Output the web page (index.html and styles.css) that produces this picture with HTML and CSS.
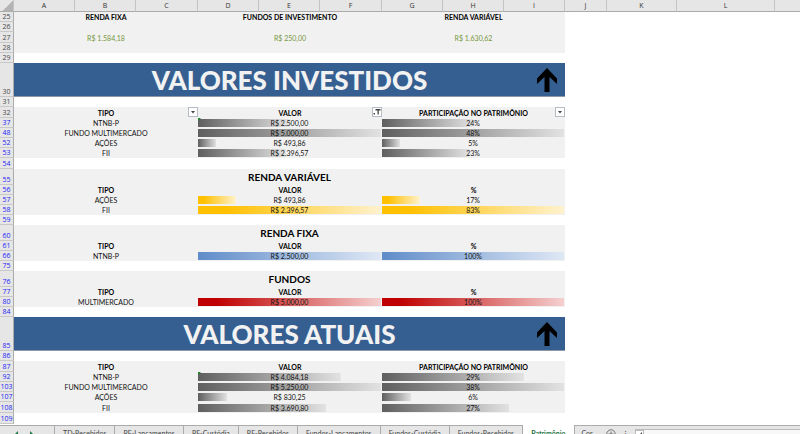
FILE: index.html
```
<!DOCTYPE html>
<html lang="pt-BR">
<head>
<meta charset="utf-8">
<title>Patrimônio</title>
<link rel="stylesheet" href="styles.css">
</head>
<body>
<main class="sheet">
<table class="grid">
<colgroup>
<col class="c-head"><col class="c-a"><col class="c-a"><col class="c-b"><col class="c-a"><col class="c-a"><col class="c-b"><col class="c-a"><col class="c-a"><col class="c-a"><col class="c-j"><col class="c-k"><col class="c-l"><col>
</colgroup>
<thead>
<tr><th class="corner"></th><th>A</th><th>B</th><th>C</th><th>D</th><th>E</th><th>F</th><th>G</th><th>H</th><th>I</th><th>J</th><th>K</th><th>L</th><th></th></tr>
</thead>
<tbody>
<tr class="fill bold"><th>25</th><td colspan="3">RENDA FIXA</td><td colspan="3">FUNDOS DE INVESTIMENTO</td><td colspan="3">RENDA VARIÁVEL</td></tr>
<tr class="fill"><th>26</th><td colspan="9"></td></tr>
<tr class="fill green tall"><th>27</th><td colspan="3">R$ 1.584,18</td><td colspan="3">R$ 250,00</td><td colspan="3">R$ 1.630,62</td></tr>
<tr class="fill"><th>28</th><td colspan="9"></td></tr>
<tr><th>29</th><td colspan="9"></td></tr>
<tr class="banner"><th>30</th><td colspan="9"><h1>VALORES INVESTIDOS</h1><a class="up" href="#" aria-label="Topo"><svg viewBox="0 0 20 24"><path d="M10 0L20 10.500V16L12.500 9V24H7.500V9L0 16V10.500Z"/></svg></a></td></tr>
<tr><th>31</th><td colspan="9"></td></tr>
<tr class="fill bold tall"><th>32</th><td colspan="3">TIPO<button class="filter" aria-label="Filtrar tipo"><svg viewBox="0 0 8 8"><path d="M2 3h4L4 5.500z"/></svg></button></td><td colspan="3">VALOR<button class="filter" aria-label="Filtrar valor"><svg viewBox="0 0 8 8"><path d="M2.500 1h5v1.500H5.800V6.500H4.500V2.500h-2zM0.500 5H2v1.500H0.500z"/></svg></button></td><td colspan="3">PARTICIPAÇÃO NO PATRIMÔNIO<button class="filter" aria-label="Filtrar participação"><svg viewBox="0 0 8 8"><path d="M2 3h4L4 5.500z"/></svg></button></td></tr>
<tr class="fill hidden-rows"><th>37</th><td colspan="3">NTNB-P</td><td colspan="3" class="flag"><div class="bar gray" style="--w:50%">R$ 2.500,00</div></td><td colspan="3"><div class="bar gray" style="--w:50%">24%</div></td></tr>
<tr class="fill hidden-rows"><th>48</th><td colspan="3">FUNDO MULTIMERCADO</td><td colspan="3"><div class="bar gray" style="--w:100%">R$ 5.000,00</div></td><td colspan="3"><div class="bar gray" style="--w:100%">48%</div></td></tr>
<tr class="fill hidden-rows"><th>52</th><td colspan="3">AÇÕES</td><td colspan="3"><div class="bar gray" style="--w:10%">R$ 493,86</div></td><td colspan="3"><div class="bar gray" style="--w:10%">5%</div></td></tr>
<tr class="fill hidden-rows"><th>53</th><td colspan="3">FII</td><td colspan="3"><div class="bar gray" style="--w:48%">R$ 2.396,57</div></td><td colspan="3"><div class="bar gray" style="--w:48%">23%</div></td></tr>
<tr class="hidden-rows tall"><th>54</th><td colspan="9"></td></tr>
<tr class="fill hidden-rows group"><th>55</th><td colspan="9"><h2>RENDA VARIÁVEL</h2></td></tr>
<tr class="fill hidden-rows bold"><th>56</th><td colspan="3">TIPO</td><td colspan="3">VALOR</td><td colspan="3">%</td></tr>
<tr class="fill hidden-rows"><th>57</th><td colspan="3">AÇÕES</td><td colspan="3"><div class="bar yellow" style="--w:21%">R$ 493,86</div></td><td colspan="3"><div class="bar yellow" style="--w:21%">17%</div></td></tr>
<tr class="fill hidden-rows"><th>58</th><td colspan="3">FII</td><td colspan="3"><div class="bar yellow" style="--w:100%">R$ 2.396,57</div></td><td colspan="3"><div class="bar yellow" style="--w:100%">83%</div></td></tr>
<tr class="hidden-rows"><th>59</th><td colspan="9"></td></tr>
<tr class="fill hidden-rows group"><th>60</th><td colspan="9"><h2>RENDA FIXA</h2></td></tr>
<tr class="fill hidden-rows bold"><th>61</th><td colspan="3">TIPO</td><td colspan="3">VALOR</td><td colspan="3">%</td></tr>
<tr class="fill hidden-rows"><th>66</th><td colspan="3">NTNB-P</td><td colspan="3"><div class="bar blue" style="--w:100%">R$ 2.500,00</div></td><td colspan="3"><div class="bar blue" style="--w:100%">100%</div></td></tr>
<tr class="hidden-rows"><th>75</th><td colspan="9"></td></tr>
<tr class="fill hidden-rows group"><th>76</th><td colspan="9"><h2>FUNDOS</h2></td></tr>
<tr class="fill hidden-rows bold"><th>77</th><td colspan="3">TIPO</td><td colspan="3">VALOR</td><td colspan="3">%</td></tr>
<tr class="fill hidden-rows"><th>80</th><td colspan="3">MULTIMERCADO</td><td colspan="3"><div class="bar red" style="--w:100%">R$ 5.000,00</div></td><td colspan="3"><div class="bar red" style="--w:100%">100%</div></td></tr>
<tr class="hidden-rows"><th>84</th><td colspan="9"></td></tr>
<tr class="banner hidden-rows"><th>85</th><td colspan="9"><h1>VALORES ATUAIS</h1><a class="up" href="#" aria-label="Topo"><svg viewBox="0 0 20 24"><path d="M10 0L20 10.500V16L12.500 9V24H7.500V9L0 16V10.500Z"/></svg></a></td></tr>
<tr class="hidden-rows"><th>86</th><td colspan="9"></td></tr>
<tr class="fill hidden-rows bold tall"><th>87</th><td colspan="3">TIPO</td><td colspan="3">VALOR</td><td colspan="3">PARTICIPAÇÃO NO PATRIMÔNIO</td></tr>
<tr class="fill hidden-rows"><th>92</th><td colspan="3">NTNB-P</td><td colspan="3" class="flag"><div class="bar gray" style="--w:78%">R$ 4.084,18</div></td><td colspan="3"><div class="bar gray" style="--w:78%">29%</div></td></tr>
<tr class="fill hidden-rows"><th>103</th><td colspan="3">FUNDO MULTIMERCADO</td><td colspan="3"><div class="bar gray" style="--w:100%">R$ 5.250,00</div></td><td colspan="3"><div class="bar gray" style="--w:100%">38%</div></td></tr>
<tr class="fill hidden-rows"><th>107</th><td colspan="3">AÇÕES</td><td colspan="3"><div class="bar gray" style="--w:16%">R$ 830,25</div></td><td colspan="3"><div class="bar gray" style="--w:16%">6%</div></td></tr>
<tr class="fill hidden-rows tall"><th>108</th><td colspan="3">FII</td><td colspan="3"><div class="bar gray" style="--w:70%">R$ 3.690,80</div></td><td colspan="3"><div class="bar gray" style="--w:70%">27%</div></td></tr>
<tr class="hidden-rows tall"><th>109</th><td colspan="9"></td></tr>
</tbody>
</table>
</main>
<footer class="tabs">
<div class="arrows"><button aria-label="Anterior"><svg viewBox="0 0 4 8"><path d="M4 0L0 4L4 8z"/></svg></button><button aria-label="Próxima"><svg viewBox="0 0 4 8"><path d="M0 0L4 4L0 8z"/></svg></button></div>
<button class="tab">TD-Recebidos</button><button class="tab">RF-Lançamentos</button><button class="tab">RF-Custódia</button><button class="tab">RF-Recebidos</button><button class="tab">Fundos-Lançamentos</button><button class="tab">Fundos-Custódia</button><button class="tab">Fundos-Recebidos</button><button class="tab active">Patrimônio</button><button class="tab last">Cor</button>
<button class="add" aria-label="Nova planilha"><svg viewBox="0 0 10 10"><circle cx="5" cy="5" r="4.200"/><path d="M5 2.500v5M2.500 5h5"/></svg></button>
<span class="dots">⋮</span>
<div class="scroll"><button aria-label="Rolar para a esquerda"><svg viewBox="0 0 4 6"><path d="M4 0L1 3L4 6z"/></svg></button></div>
</footer>
</body>
</html>
```
FILE: styles.css
```
* { box-sizing: border-box; }

body {
  margin: 0;
  height: 100vh;
  overflow: hidden;
  display: flex;
  flex-direction: column;
  background: #fff;
  color: #111;
  font: 7px/8px Lato, "Liberation Sans", sans-serif;
}

button {
  padding: 0;
  border: 0;
  background: none;
  color: inherit;
  font: inherit;
}

svg { display: block; }

.sheet { flex: 1; min-height: 0; overflow: hidden; }

.grid {
  width: 100%;
  table-layout: fixed;
  border-collapse: separate;
  border-spacing: 0;
}

.c-head { width: 14px; }
.c-a { width: 61px; }
.c-b { width: 62px; }
.c-j { width: 42px; }
.c-k { width: 70px; }
.c-l { width: 98px; }

th, td { padding: 0; height: 10px; text-align: center; white-space: nowrap; }
.tall > * { height: 11px; }
.group > * { height: 16px; }
.banner > * { height: 34px; }

thead th {
  height: 12px;
  background: #e6e6e6;
  border-right: 1px solid #c4c4c4;
  border-bottom: 1px solid #ababab;
  color: #333;
  font: 7px/8px "Open Sans", sans-serif;
}
thead th:last-child { border-right: 0; }
thead .corner { background: linear-gradient(135deg, #e6e6e6 55%, #b4b4b4 55%); }

tbody th {
  background: #e6e6e6;
  border-right: 1px solid #ababab;
  border-bottom: 1px solid #c8c8c8;
  color: #4a4a4a;
  font: 7px/8px "Open Sans", sans-serif;
  vertical-align: bottom;
}
.hidden-rows th { color: #2424f5; }

td { position: relative; }
.fill td { background: #f1f1f1; }
.bold td { font-weight: 700; color: #000; }
.green td { color: #76973c; }

.banner td {
  background: #365f91;
  border-bottom: 1px solid #8c97a8;
}

h1 {
  margin: 0;
  color: #f2f2f2;
  font: 900 26px/32px Lato, sans-serif;
}
h2 {
  margin: 0;
  font: 700 10px/14px Lato, sans-serif;
  color: #000;
}

.up { position: absolute; right: 8px; top: 5px; width: 20px; fill: #000; }

.filter {
  position: absolute;
  right: 0;
  top: 0;
  width: 10px;
  height: 10px;
  background: #fff;
  border: 1px solid #b5bcc6;
  fill: #444;
}

.flag::before {
  content: "";
  position: absolute;
  left: 0;
  top: 0;
  border-top: 3px solid #1f8a2a;
  border-right: 3px solid transparent;
}

.bar {
  margin: 1px 1px 1px 0;
  background-repeat: no-repeat;
  background-size: var(--w) 100%;
}
.gray { background-image: linear-gradient(90deg, #5f5f5f, #e2e2e2); }
.yellow { background-image: linear-gradient(90deg, #ffc000 15%, #fff2cf); }
.blue { background-image: linear-gradient(90deg, #5f8cc9, #dfe8f5); }
.red { background-image: linear-gradient(90deg, #c00000 10%, #f5d0d0); }

.tabs {
  flex: none;
  display: flex;
  align-items: flex-start;
  height: 9px;
  overflow: hidden;
  background: #e6e6e6;
  box-shadow: inset 0 1px #ababab;
  color: #444;
}
.arrows {
  flex: 0 0 54px;
  display: flex;
  gap: 12px;
  padding: 6px 0 0 14px;
  fill: #1f7246;
}
.arrows svg { width: 4px; height: 8px; }
.tab {
  flex: none;
  height: 16px;
  padding: 0 8px;
  border-left: 1px solid #ababab;
}
.active { background: #fff; color: #1f7246; font-weight: 700; }
.last { padding: 0 7px; }
.add { margin: 4px 0 0 6px; }
.add svg { width: 10px; height: 10px; fill: none; stroke: #777; }
.dots { margin: 4px 6px 0; }
.scroll {
  flex: 1;
  margin-top: 4px;
  height: 12px;
  background: #f8f8f8;
  border-top: 1px solid #bbb;
}
.scroll button {
  width: 9px;
  height: 10px;
  padding-left: 2px;
  background: #fff;
  border: 1px solid #bbb;
}
.scroll svg { width: 4px; height: 6px; fill: #555; }
```
